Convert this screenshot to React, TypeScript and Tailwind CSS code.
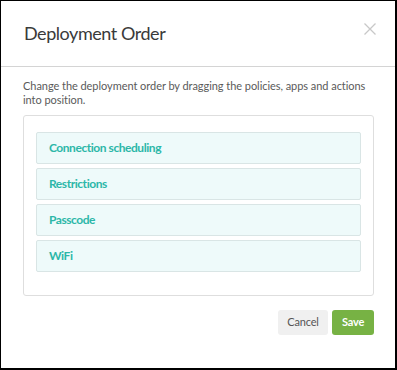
import React from "react";

const items = ["Connection scheduling", "Restrictions", "Passcode", "WiFi"];

export default function App() {
  return (
    <div
      className="w-[397px] h-[370px] bg-white border-l border-t border-r-2 border-b-2 border-black flex flex-col"
      style={{ fontFamily: 'Lato, "Noto Sans", sans-serif' }}
    >
      <div className="h-[66px] shrink-0 border-b border-[#d4d4d4] flex items-start justify-between pl-[23px] pr-[19px] pt-[19px]">
        <h1 className="text-[18px] leading-[26px] tracking-[-0.45px] text-[#3a3a3a]">Deployment Order</h1>
        <button className="mt-[3px] text-[#c8c8c8]" aria-label="Close">
          <svg width="12" height="12" viewBox="0 0 12 12" fill="none" stroke="currentColor" strokeWidth="1.3">
            <path d="M0.5 0.5 L11.5 11.5 M11.5 0.5 L0.5 11.5" />
          </svg>
        </button>
      </div>
      <div className="flex-1 flex flex-col pl-[22px] pr-[21px] pt-[12px]">
        <p className="text-[11px] leading-[14px] tracking-[-0.05px] text-[#5a5a5a]">
          Change the deployment order by dragging the policies, apps and actions into position.
        </p>
        <div className="mt-[8px] border border-[#dedede] rounded-[3px] px-[12px] pt-[16px] pb-[23px] flex flex-col gap-[4px]">
          {items.map((t) => (
            <div
              key={t}
              className="h-[32px] flex items-center pl-[12px] bg-[#eefafa] border border-[#d9e5e5] rounded-[2px] text-[12px] font-bold tracking-[-0.45px] text-[#2cb7a8]"
            >
              {t}
            </div>
          ))}
        </div>
        <div className="flex justify-end gap-[4px] mt-[14px]">
          <button className="h-[25px] w-[50px] rounded-[3px] bg-[#f0f0f0] text-[11px] tracking-[-0.2px] text-[#555]">Cancel</button>
          <button className="h-[25px] w-[42px] rounded-[3px] bg-[#77b244] text-[11px] font-bold tracking-[-0.2px] text-white">Save</button>
        </div>
      </div>
    </div>
  );
}
